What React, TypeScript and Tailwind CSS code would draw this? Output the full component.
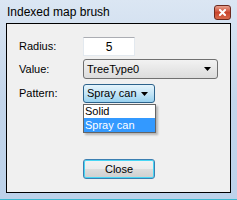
import { useState } from 'react'

const font = { fontFamily: '"Liberation Sans", Arial, sans-serif' }

function Arrow() {
  return (
    <svg width="7" height="4" viewBox="0 0 7 4" className="shrink-0">
      <path d="M0 0h7L3.5 4z" fill="#000" />
    </svg>
  )
}

export default function App() {
  const [radius] = useState('5')

  return (
    <div
      className="flex h-[200px] w-[237px] flex-col bg-gradient-to-b from-[#dbe6f3] via-[#c3d5ea] to-[#bcd2ea] text-[11px] text-black"
      style={font}
    >
      {/* title bar */}
      <div className="flex h-[23px] shrink-0 items-start justify-between pl-[7px] pr-[6px]">
        <span className="mt-[5px] text-[12px] leading-[14px]">Indexed map brush</span>
        <button className="mt-[5px] flex h-[15px] w-[17px] items-center justify-center rounded-[3px] border border-[#6d2a1f] bg-gradient-to-b from-[#e8a18f] via-[#c9452d] to-[#d86a4c]">
          <svg width="7" height="7" viewBox="0 0 7 7">
            <path d="M1 1l5 5M6 1l-5 5" stroke="#fff" strokeWidth="2" strokeLinecap="square" />
          </svg>
        </button>
      </div>

      {/* client area */}
      <div className="mx-[6px] mb-[6px] flex-1 border border-black bg-[#f0f0f0] pl-[12px] pt-[13px]">
        <div className="grid grid-cols-[64px_1fr] items-center gap-y-[3px]">
          <span>Radius:</span>
          <div className="flex h-[19px] w-[52px] items-center justify-center border border-[#e3e9ef] border-t-[#abadb3] bg-white text-[12px]">
            {radius}
          </div>

          <span>Value:</span>
          <div className="flex h-[20px] w-[135px] items-center justify-between rounded-[3px] border border-[#707070] bg-gradient-to-b from-[#f2f2f2] to-[#dcdcdc] pl-[3px] pr-[6px]">
            <span>TreeType0</span>
            <Arrow />
          </div>

          <span className="mt-[2px]">Pattern:</span>
          <div className="relative mt-[2px] w-[72px]">
            <div className="flex h-[19px] items-center justify-between rounded-[3px] border border-[#2c628b] bg-gradient-to-b from-[#e5f4fc] via-[#c4e5f6] to-[#98d1ef] pl-[3px] pr-[6px]">
              <span>Spray can</span>
              <Arrow />
            </div>
            <div className="absolute left-0 top-[20px] z-10 w-[73px] border border-[#646464] bg-white shadow-[2px_2px_2px_rgba(0,0,0,0.25)]">
              <div className="h-[13px] pl-[1px] leading-[13px]">Solid</div>
              <div className="h-[14px] bg-[#3399ff] pl-[1px] leading-[14px] text-white">Spray can</div>
            </div>
          </div>
        </div>

        <button className="ml-[64px] mt-[56px] flex h-[20px] w-[72px] items-center justify-center rounded-[3px] border border-[#3c7fb1] bg-[linear-gradient(to_bottom,#f2f2f2_0%,#ebebeb_50%,#dddddd_51%,#cfcfcf_100%)] shadow-[inset_0_0_0_1px_#48d6f4]">
          Close
        </button>
      </div>
      <div className="h-[1px] shrink-0 bg-[#3bb8cf]" />
    </div>
  )
}
